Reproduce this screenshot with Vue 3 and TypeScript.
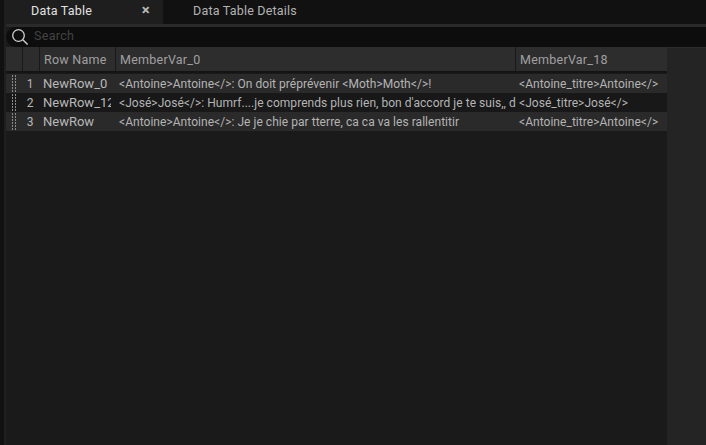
<script setup lang="ts">
interface Row {
  id: number
  name: string
  text: string
  title: string
}
const rows: Row[] = [
  { id: 1, name: 'NewRow_0', text: '<Antoine>Antoine</>: On doit préprévenir <Moth>Moth</>!', title: '<Antoine_titre>Antoine</>' },
  { id: 2, name: 'NewRow_12', text: "<José>José</>: Humrf....je comprends plus rien, bon d'accord je te suis,, d", title: '<José_titre>José</>' },
  { id: 3, name: 'NewRow', text: '<Antoine>Antoine</>: Je je chie par tterre, ca ca va les rallentitir', title: '<Antoine_titre>Antoine</>' },
]
</script>

<template>
  <div class="app">
    <div class="gutter"></div>
    <div class="main">
      <div class="tabs">
        <div class="tab active">
          <span class="tab-label">Data Table</span>
          <span class="close">×</span>
        </div>
        <div class="tab">
          <span class="tab-label">Data Table Details</span>
        </div>
      </div>
      <div class="rule"></div>
      <div class="search">
        <svg class="glass" width="18" height="18" viewBox="0 0 18 18">
          <circle cx="7.5" cy="7.5" r="5.8" fill="none" stroke="#d0d0d0" stroke-width="1.3" />
          <path d="M11.8 11.8 L16.6 16.6" stroke="#d0d0d0" stroke-width="1.4" fill="none" />
        </svg>
        <span class="search-text">Search</span>
      </div>
      <div class="body">
        <div class="table">
          <div class="head">
            <div class="hc c-grip"></div>
            <div class="hc c-num"></div>
            <div class="hc c-name">Row Name</div>
            <div class="hc c-text">MemberVar_0</div>
            <div class="hc c-title">MemberVar_18</div>
          </div>
          <div class="rows">
            <div v-for="r in rows" :key="r.id" class="row">
              <div class="c-grip grip"><i></i><i></i></div>
              <div class="c-num num">{{ r.id }}</div>
              <div class="name">{{ r.name }}</div>
              <div class="c-text cell">{{ r.text }}</div>
              <div class="c-title cell">{{ r.title }}</div>
            </div>
          </div>
        </div>
        <div class="spare"></div>
      </div>
    </div>
  </div>
</template>

<style>
html, body { margin: 0; background: #1a1a1a; overflow: hidden; }
</style>

<style scoped>
.app {
  width: 706px;
  height: 445px;
  display: flex;
  background: #1a1a1a;
  font-family: Roboto, "Liberation Sans", sans-serif;
  overflow: hidden;
}
.gutter {
  width: 4px;
  flex: none;
  background: #111111;
  border-right: 2px solid #1f1f1f;
}
.main {
  flex: 1;
  min-width: 0;
  display: flex;
  flex-direction: column;
}
.tabs {
  height: 24px;
  display: flex;
  background: #111111;
}
.tab {
  width: 157px;
  display: flex;
  align-items: center;
  justify-content: space-between;
  box-sizing: border-box;
  padding: 0 13px 4px 25px;
  color: #b4b4b4;
  font-size: 12.5px;
  letter-spacing: 0.2px;
}
.tab.active {
  background: #1e1e1e;
  color: #e2e2e2;
}
.tab:not(.active) { padding-left: 30px; width: 200px; }
.close {
  color: #b8b8b8;
  font-size: 15px;
  font-weight: 700;
}
.rule {
  height: 3px;
  background: #2a2a2a;
}
.search {
  height: 20px;
  display: flex;
  align-items: center;
  gap: 5px;
  padding-left: 5px;
  background: #0d0d0d;
  border-radius: 10px 0 0 10px;
}
.glass { flex: none; }
.search-text {
  color: #444444;
  font-size: 12.5px;
  letter-spacing: 0.3px;
  padding-bottom: 3px;
}
.body {
  flex: 1;
  display: flex;
  min-height: 0;
}
.table {
  width: 661px;
  flex: none;
  display: flex;
  flex-direction: column;
  background: #1a1a1a;
}
.head {
  height: 24px;
  display: flex;
  background: #2d2d2d;
  border-bottom: 2px solid #141414;
}
.hc {
  box-sizing: border-box;
  display: flex;
  align-items: center;
  padding-left: 4px;
  color: #a0a0a0;
  font-size: 12.5px;
  letter-spacing: 0.25px;
  border-right: 1px solid #191919;
}
.hc.c-title { border-right: 0; }
.rows { margin-top: 1px; }
.row {
  height: 19px;
  display: flex;
  align-items: center;
  background: #2a2a2a;
}
.row:nth-child(even) { background: #181818; }
.c-grip { width: 17px; flex: none; }
.c-num { width: 17px; flex: none; }
.c-name { width: 76px; flex: none; }
.c-text { width: 400px; flex: none; }
.c-title { width: 151px; flex: none; }
.grip {
  align-self: stretch;
  display: flex;
  gap: 2px;
  padding: 1px 0 1px 6px;
  box-sizing: border-box;
}
.grip i {
  width: 1px;
  background: repeating-linear-gradient(to bottom, #8a8a8a 0 2px, transparent 2px 3px);
}
.num {
  color: #b8b8b8;
  font-size: 12px;
  text-align: center;
  box-sizing: border-box;
  padding-right: 3px;
}
.name {
  width: 71px;
  flex: none;
  margin-right: 5px;
  color: #b8b8b8;
  font-size: 13px;
  padding-left: 3px;
  box-sizing: border-box;
  overflow: hidden;
  white-space: nowrap;
}
.cell {
  color: #b4b4b4;
  font-size: 12px;
  letter-spacing: 0.04px;
  padding-left: 3px;
  box-sizing: border-box;
  overflow: hidden;
  white-space: nowrap;
}
.spare {
  flex: 1;
  background: #242424;
  border-top: 1px solid #2c2c2c;
}
</style>
